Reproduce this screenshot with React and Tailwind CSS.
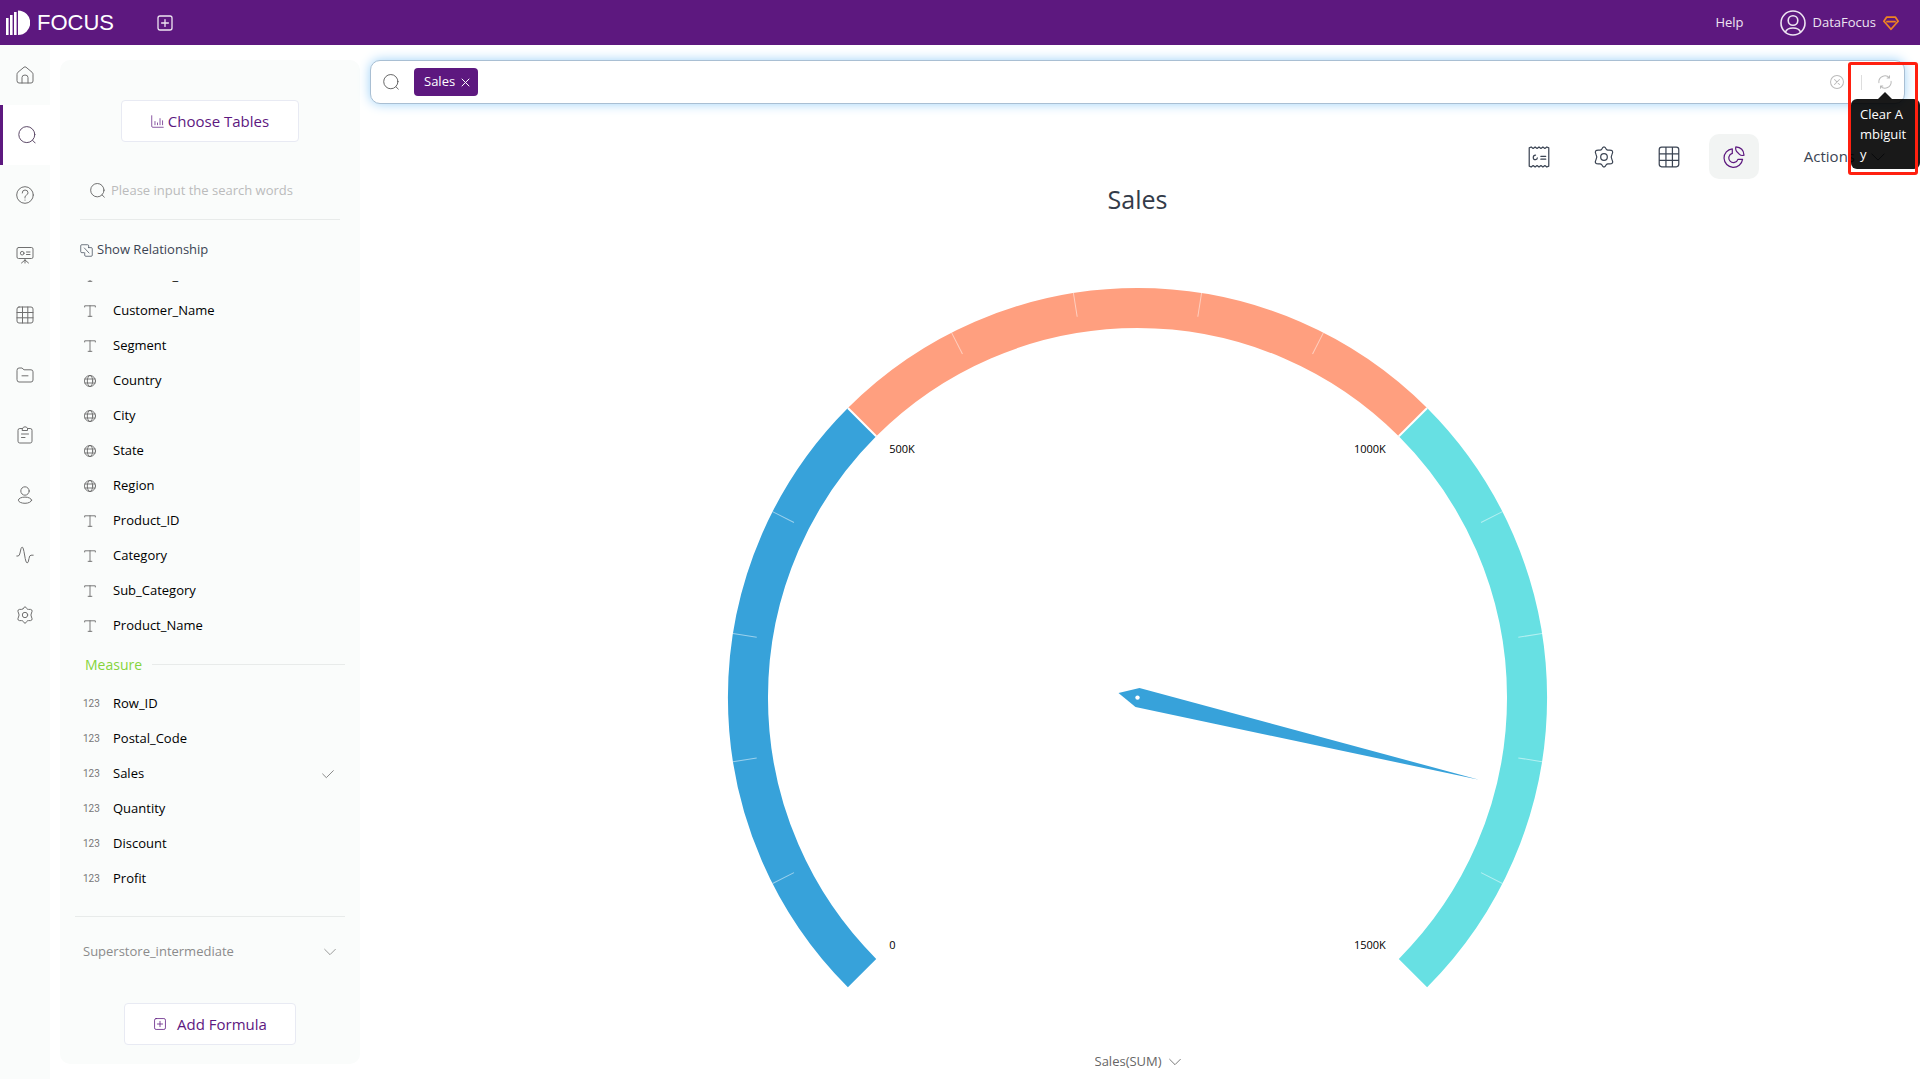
import React, { useState } from "react";

function Icon({ size = 18, width = 1, box = 18, className = "", children }) {
  return (
    <svg
      width={size}
      height={size}
      viewBox={`0 0 ${box} ${box}`}
      fill="none"
      stroke="currentColor"
      strokeWidth={width}
      strokeLinecap="round"
      strokeLinejoin="round"
      aria-hidden="true"
      className={`shrink-0 ${className}`}
    >
      {children}
    </svg>
  );
}

const icons = {
  home: <path d="M1 8.2 Q1 7 1.9 6.3 L8 1.2 Q9 .5 10 1.2 L16.1 6.3 Q17 7 17 8.2 V15 Q17 17 15 17 H3 Q1 17 1 15 Z M6 17 V11.5 Q6 9 9 9 Q12 9 12 11.5 V17" />,
  search: (
    <>
      <circle cx="8.8" cy="8.6" r="8" />
      <path d="M14.6 14.4 L17.2 17" />
    </>
  ),
  help: (
    <>
      <circle cx="9" cy="9" r="8.3" />
      <path d="M6.2 7 Q6.2 4 9 4 Q12 4 12 6.8 Q12 8.4 10.3 9.2 Q9 9.9 9 11.2 V12 M9 14 V14.2" />
    </>
  ),
  board: (
    <>
      <path d="M2.5 1.5 H15.5 Q17 1.5 17 3 V11 Q17 12.5 15.5 12.5 H2.5 Q1 12.5 1 11 V3 Q1 1.5 2.5 1.5 Z M9 12.5 V17 M5.5 17 L9 14 L12.5 17 M10.5 6 H14 M10.5 8.5 H14" />
      <circle cx="6.2" cy="7.2" r="1.8" />
    </>
  ),
  grid: <path d="M3 1 H15 Q17 1 17 3 V15 Q17 17 15 17 H3 Q1 17 1 15 V3 Q1 1 3 1 Z M6.5 1 V17 M11.8 1 V17 M1 6.5 H17 M1 11.8 H17" />,
  folder: <path d="M1 4 Q1 2 3 2 H6 L8 3.8 H15 Q17 3.8 17 5.8 V14 Q17 16 15 16 H3 Q1 16 1 14 Z M6 9.8 H12" />,
  clipboard: <path d="M6.5 2.5 H3.8 Q2 2.5 2 4.3 V15.2 Q2 17 3.8 17 H14.2 Q16 17 16 15.2 V4.3 Q16 2.5 14.2 2.5 H11.5 M6.5 2.5 Q7 .8 9 .8 Q11 .8 11.5 2.5 V4.5 H6.5 Z M5.5 8 H12.5 M5.5 11.5 H9" />,
  user: (
    <>
      <circle cx="9" cy="5" r="4.2" />
      <ellipse cx="9" cy="14.2" rx="6.6" ry="3.1" />
    </>
  ),
  pulse: <path d="M.8 10 H2 Q3.5 10 4 7 Q5 1 6.2 1 Q7.3 1 8.6 9 Q9.8 17 11.2 17 Q12.4 17 13 12.5 Q13.4 9.2 15 9.2 H17.2" />,
  gear: (
    <>
      <path d="M7 2.8 Q9 -1.2 11 2.8 Q11.5 3.6 12.5 3.4 Q17.6 2.8 15.5 7 Q14.3 9 15.5 11 Q17.6 15.2 12.5 14.6 Q11.5 14.4 11 15.2 Q9 19.2 7 15.2 Q6.5 14.4 5.5 14.6 Q.4 15.2 2.5 11 Q3.7 9 2.5 7 Q.4 2.8 5.5 3.4 Q6.5 3.6 7 2.8 Z" />
      <circle cx="9" cy="9" r="2.7" />
    </>
  ),
  plusBox: <path d="M4 2 H14 Q16 2 16 4 V14 Q16 16 14 16 H4 Q2 16 2 14 V4 Q2 2 4 2 Z M9 5.6 V12.4 M5.6 9 H12.4" />,
  chart: <path d="M1 1 V15.5 Q1 17 2.5 17 H17 M5.5 9 V13.5 M9 11 V13.5 M12.5 5 V13.5 M16 8 V13.5" />,
  relation: <path d="M12 5 V2.5 Q12 1 10.5 1 H2.5 Q1 1 1 2.5 V10.5 Q1 12 2.5 12 H5 M12 5 H15.5 Q17 5 17 6.5 V15.5 Q17 17 15.5 17 H8 Q6.5 17 6.5 15.5 V12 M6 5.5 L12.5 12.5" />,
  receipt: <path d="M1 1.5 L2.6 .8 L4.2 2 L5.8 .8 L7.4 2 L9 .8 L10.6 2 L12.2 .8 L13.8 2 L15.4 .8 L17 1.5 V16.5 L15.4 17.2 L13.8 16 L12.2 17.2 L10.6 16 L9 17.2 L7.4 16 L5.8 17.2 L4.2 16 L2.6 17.2 L1 16.5 Z M6.2 7.4 Q4.3 7.4 4.3 9.4 Q4.3 11.3 6.2 11.2 Q7.6 10.8 7.6 9.8 M10.5 8.4 H14.5 M10.5 10.8 H14.5" />,
  pie: <path d="M7.6 2.3 A7.6 7.6 0 1 0 16 10.9 H12.2 A3.8 3.8 0 1 1 7.6 6.1 Z M10.5 .8 Q16.8 1.2 17.2 7.5 Q15 8.3 13.5 6.8 L11.2 4.5 Q10 3.2 10.5 .8 Z" />,
  text: <path d="M1 3 V1.2 H17 V3 M9 1.2 V17 M6.2 17 H11.8" />,
  globe: (
    <>
      <circle cx="9" cy="9" r="8.3" />
      <ellipse cx="9" cy="9" rx="4" ry="8.3" />
      <path d="M1.4 6 H16.6 M1.4 12 H16.6" />
    </>
  ),
  chevron: <path d="M1 5 L9 13 L17 5" />,
  check: <path d="M1 9 L6.5 14.5 L17 4" />,
  close: <path d="M2 2 L16 16 M16 2 L2 16" />,
  clear: (
    <>
      <circle cx="9" cy="9" r="8.3" />
      <path d="M5.8 5.8 L12.2 12.2 M12.2 5.8 L5.8 12.2" />
    </>
  ),
  refresh: <path d="M1.2 10 A7.8 7.8 0 0 1 14.8 3.8 M14.8 1 V4 H11.8 M16.8 8 A7.8 7.8 0 0 1 3.2 14.2 M3.2 17 V14 H6.2" />,
};

const navItems = [
  ["Home", "home"],
  ["Search", "search"],
  ["Questions", "help"],
  ["Dashboards", "board"],
  ["Tables", "grid"],
  ["Resources", "folder"],
  ["Tasks", "clipboard"],
  ["Users", "user"],
  ["Monitor", "pulse"],
  ["Settings", "gear"],
];

const attributes = [
  ["Customer_ID", "text"],
  ["Customer_Name", "text"],
  ["Segment", "text"],
  ["Country", "globe"],
  ["City", "globe"],
  ["State", "globe"],
  ["Region", "globe"],
  ["Product_ID", "text"],
  ["Category", "text"],
  ["Sub_Category", "text"],
  ["Product_Name", "text"],
];

const measures = ["Row_ID", "Postal_Code", "Sales", "Quantity", "Discount", "Profit"];

function Header() {
  return (
    <header className="flex h-[45px] shrink-0 items-center bg-[#5d187f] pr-[21px] pl-1.5 text-[#eee5f2]">
      <a href="#home" className="flex items-center gap-[7px] text-white">
        <svg width="24" height="26" viewBox="0 0 24 26" fill="currentColor" aria-hidden="true">
          <path d="M0 8 H2.6 V25 H0 Z M4 5 H6.6 V25 H4 Z M8 2 H10.6 V25 H8 Z M12 .5 A12.2 12.2 0 0 1 12 25 Z" />
        </svg>
        <span className="font-['Liberation_Sans',sans-serif] text-[22px] leading-6">FOCUS</span>
      </a>
      <button aria-label="New" className="ml-[42px]">
        <Icon width={1.3}>{icons.plusBox}</Icon>
      </button>
      <a href="#help" className="ml-auto text-[13px]">Help</a>
      <button className="ml-9 flex items-center gap-[7px] text-[13px]">
        <Icon size={26} box={26} width={1.6}>
          <circle cx="13" cy="13" r="12" />
          <circle cx="13" cy="10.5" r="4.8" />
          <path d="M5.5 22 Q7 18 13 18 Q19 18 20.5 22" />
        </Icon>
        DataFocus
        <Icon size={16} width={2} className="text-[#ee8322]">
          <path d="M4 2.5 H14 L17 7 L9 16 L1 7 Z M4.5 7.5 H13.5" />
        </Icon>
      </button>
    </header>
  );
}

function SideNav() {
  return (
    <nav className="w-[50px] shrink-0 bg-[#fafcfb] text-[#707070]">
      {navItems.map(([label, icon]) => (
        <a
          key={label}
          href={`#${icon}`}
          aria-label={label}
          className={
            icon === "search"
              ? "flex h-[60px] items-center justify-center border-l-[3px] border-[#5d187f] bg-white text-[#5d4a68]"
              : "flex h-[60px] items-center justify-center"
          }
        >
          <Icon>{icons[icon]}</Icon>
        </a>
      ))}
    </nav>
  );
}

function FieldPanel() {
  return (
    <aside className="mb-[15px] flex w-[300px] shrink-0 flex-col rounded-[10px] bg-[#fafcfb]">
      <button className="mt-10 flex h-[42px] w-[178px] shrink-0 items-center justify-center gap-1 self-center rounded border border-[#e8eaf3] bg-white text-[15px] text-[#5d187f]">
        <Icon size={13}>{icons.chart}</Icon>
        Choose Tables
      </button>

      <label className="mx-5 mt-7 flex h-[50px] shrink-0 items-center gap-1.5 border-b border-[#e8ebea] pb-2 pl-2.5">
        <Icon size={15} className="text-[#555]">{icons.search}</Icon>
        <input
          aria-label="Search fields"
          placeholder="Please input the search words"
          className="w-full bg-transparent text-[13px] outline-none placeholder:text-[#bbb]"
        />
      </label>

      <button className="mt-5 flex h-5 shrink-0 items-center gap-1 self-start pl-5 text-[13px] text-[#3b4453]">
        <Icon size={13}>{icons.relation}</Icon>
        Show Relationship
      </button>

      {/* field list stays scrolled to its end */}
      <div className="mt-5 flex min-h-0 flex-1 flex-col justify-end overflow-hidden text-[13px] text-black">
        <ul>
          {attributes.map(([name, icon]) => (
            <li key={name}>
              <button className="flex h-[35px] w-full items-center gap-[17px] pl-6">
                <Icon size={12} width={1.3} className="text-[#666]">{icons[icon]}</Icon>
                {name}
              </button>
            </li>
          ))}
        </ul>
        <div className="flex h-[43px] shrink-0 items-center gap-2.5 pr-[15px] pl-[25px] text-sm text-[#86d43c]">
          Measure
          <span className="h-px flex-1 bg-[#e8ebea]" />
        </div>
        <ul>
          {measures.map((name) => (
            <li key={name}>
              <button className="flex h-[35px] w-full items-center pr-[26px] pl-[23px]">
                <span className="w-[30px] text-left font-['Roboto',sans-serif] text-[10px] text-[#777]">123</span>
                {name}
                {name === "Sales" && <Icon size={12} width={1.3} className="ml-auto text-[#777]">{icons.check}</Icon>}
              </button>
            </li>
          ))}
        </ul>
        <hr className="mx-[15px] mt-5 shrink-0 border-[#e8ebea]" />
        <button className="flex h-[70px] shrink-0 items-center justify-between pr-6 pl-[23px] text-[#8b8b8b]">
          Superstore_intermediate
          <Icon size={12} width={1.3}>{icons.chevron}</Icon>
        </button>
      </div>

      <button className="mt-4 mb-[19px] flex h-[42px] w-[172px] shrink-0 items-center justify-center gap-2.5 self-center rounded border border-[#e8eaf3] bg-white text-[15px] text-[#5d187f]">
        <Icon size={14}>{icons.plusBox}</Icon>
        Add Formula
      </button>
    </aside>
  );
}

function SearchBar() {
  const [terms, setTerms] = useState(["Sales"]);

  return (
    <div className="flex h-11 shrink-0 items-center rounded-[10px] border border-[#a9bfd3] bg-white px-3 shadow-[0_0_12px_#9fd2f8]">
      <Icon size={16} className="mr-[15px] text-[#555]">{icons.search}</Icon>
      {terms.map((term) => (
        <span key={term} className="flex h-7 items-center gap-1.5 rounded bg-[#5d187f] pr-2 pl-2.5 text-[13px] text-white">
          {term}
          <button aria-label={`Remove ${term}`} onClick={() => setTerms(terms.filter((t) => t !== term))}>
            <Icon size={9} width={2}>{icons.close}</Icon>
          </button>
        </span>
      ))}
      <input aria-label="Search data" className="min-w-0 flex-1 px-2 text-sm outline-none" />
      <button aria-label="Clear" className="text-[#bbb]" onClick={() => setTerms([])}>
        <Icon size={14} width={1.3}>{icons.clear}</Icon>
      </button>
      <span className="mr-4 ml-[17px] h-[15px] w-px bg-[#ddd]" />
      <div className="relative">
        <button aria-label="Clear Ambiguity" className="block text-[#bbb]">
          <Icon size={14} width={1.3}>{icons.refresh}</Icon>
        </button>
        <div
          role="tooltip"
          className="absolute top-6 -left-[27px] z-10 w-[69px] rounded-md bg-black/90 px-[9px] py-[5px] text-[13px] leading-5 font-medium break-all text-white"
        >
          <span className="absolute bottom-full left-[27px] border-x-[7px] border-b-[7px] border-x-transparent border-b-black/90" />
          Clear Ambiguity
        </div>
        <div className="pointer-events-none absolute -top-[13px] -left-[30px] z-20 h-[113px] w-[70px] rounded-[3px] border-[3px] border-[#ff2010]" />
      </div>
    </div>
  );
}

function Toolbar() {
  return (
    <div className="mt-[30px] flex h-[45px] shrink-0 items-center justify-end text-[#3b4453]">
      <button aria-label="Report" className="mr-[43px]"><Icon size={22}>{icons.receipt}</Icon></button>
      <button aria-label="Chart settings" className="mr-[43px]"><Icon size={22}>{icons.gear}</Icon></button>
      <button aria-label="Table view" className="mr-[29px]"><Icon size={22}>{icons.grid}</Icon></button>
      <button aria-label="Chart view" className="flex h-[45px] w-[50px] items-center justify-center rounded-[10px] bg-[#f2f4f3] text-[#5d187f]">
        <Icon size={22}>{icons.pie}</Icon>
      </button>
      <button aria-haspopup="menu" className="mr-5 ml-[45px] flex items-center gap-4 text-[15px]">
        Actions
        <Icon size={14} width={1.2}>{icons.chevron}</Icon>
      </button>
    </div>
  );
}

const C = 410;
const R = 409;
const BAND = 40;

// angles run clockwise from the positive x axis
function point(deg, r) {
  const a = (deg * Math.PI) / 180;
  return [C + r * Math.cos(a), C + r * Math.sin(a)];
}

function arc(from, to) {
  const r = R - BAND / 2;
  return `M ${point(from, r).join(" ")} A ${r} ${r} 0 0 1 ${point(to, r).join(" ")}`;
}

function Gauge() {
  const bands = [
    [135, 225, "#37a2da"],
    [225, 315, "#ff9f7f"],
    [315, 405, "#67e0e3"],
  ];
  const ticks = [];
  for (let deg = 153; deg < 405; deg += 18) {
    if (deg !== 225 && deg !== 315) ticks.push(deg);
  }

  return (
    <svg viewBox="0 0 820 700" className="h-full w-full" role="img" aria-label="Sales gauge">
      {bands.map(([from, to, color]) => (
        <path key={from} d={arc(from, to)} fill="none" stroke={color} strokeWidth={BAND} />
      ))}
      {ticks.map((deg) => {
        const [x1, y1] = point(deg, R);
        const [x2, y2] = point(deg, R - 24);
        return <line key={deg} x1={x1} y1={y1} x2={x2} y2={y2} stroke="#fff" strokeOpacity="0.5" />;
      })}
      {[225, 315].map((deg) => {
        const [x1, y1] = point(deg, R);
        const [x2, y2] = point(deg, R - BAND);
        return <line key={deg} x1={x1} y1={y1} x2={x2} y2={y2} stroke="#fff" strokeWidth="2" />;
      })}
      <path d="M391 405.5 L412 400.5 L751 492 L408 419.5 Z" fill="#37a2da" />
      <circle cx="410" cy="410" r="2.2" fill="#fff" />
      <g className="text-[11px]" fill="#000">
        <text x="162" y="661">0</text>
        <text x="162" y="166">500K</text>
        <text x="658" y="166" textAnchor="end">1000K</text>
        <text x="658" y="661" textAnchor="end">1500K</text>
      </g>
    </svg>
  );
}

export default function App() {
  return (
    <div className="flex h-screen flex-col overflow-hidden bg-white font-['Open_Sans','Noto_Sans',sans-serif]">
      <Header />
      <div className="flex min-h-0 flex-1">
        <SideNav />
        <div className="flex min-w-0 flex-1 gap-2.5 pt-[15px] pr-[15px] pl-2.5">
          <FieldPanel />
          <main className="flex min-w-0 flex-1 flex-col pb-[7px]">
            <SearchBar />
            <Toolbar />
            <h1 className="shrink-0 text-center text-[25px] leading-10 text-[#333b49]">Sales</h1>
            <div className="mt-[68px] mb-16 min-h-0 flex-1">
              <Gauge />
            </div>
            <label className="flex h-5 shrink-0 items-center justify-center gap-1.5 text-[13px] text-[#666]">
              <select aria-label="Measure" className="appearance-none bg-transparent outline-none">
                <option>Sales(SUM)</option>
              </select>
              <Icon size={12} width={1.3}>{icons.chevron}</Icon>
            </label>
          </main>
        </div>
      </div>
    </div>
  );
}
